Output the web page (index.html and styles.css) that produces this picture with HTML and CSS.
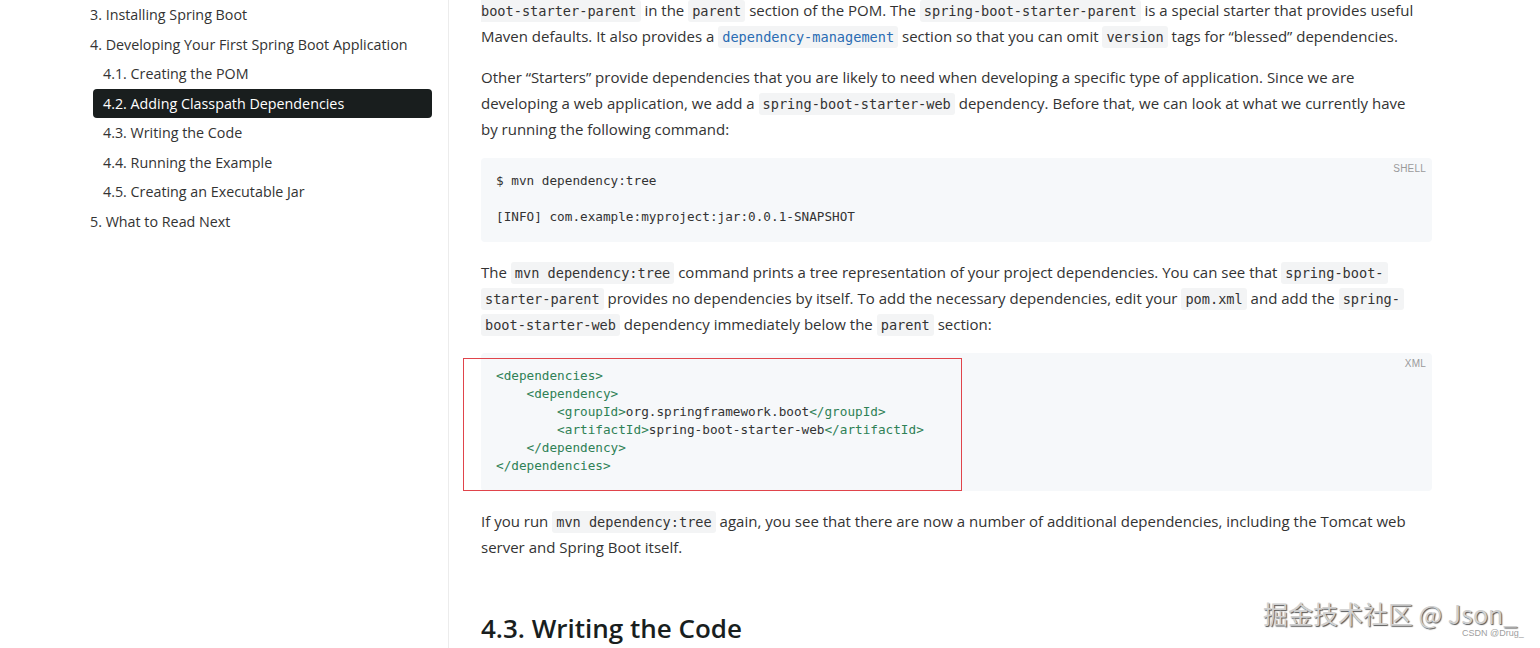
FILE: index.html
```html
<!DOCTYPE html>
<html lang="en">
<head>
<meta charset="utf-8">
<title>Spring Boot – Developing Your First Spring Boot Application</title>
<link rel="stylesheet" href="styles.css">
</head>
<body>
<div class="page">
  <aside class="toc">
    <ul class="toc-list">
      <li><a class="toc-link">3. Installing Spring Boot</a></li>
      <li>
        <a class="toc-link">4. Developing Your First Spring Boot Application</a>
        <ul class="toc-sub">
          <li><a class="toc-link">4.1. Creating the POM</a></li>
          <li><a class="toc-link is-active">4.2. Adding Classpath Dependencies</a></li>
          <li><a class="toc-link">4.3. Writing the Code</a></li>
          <li><a class="toc-link">4.4. Running the Example</a></li>
          <li><a class="toc-link">4.5. Creating an Executable Jar</a></li>
        </ul>
      </li>
      <li><a class="toc-link">5. What to Read Next</a></li>
    </ul>
  </aside>

  <main class="doc">
    <p class="para para-first"><code class="ic ic-cont">boot-starter-parent</code> in the <code class="ic">parent</code> section of the POM. The <code class="ic">spring-boot-starter-parent</code> is a special starter that provides useful<br>Maven defaults. It also provides a <code class="ic ic-link">dependency-management</code> section so that you can omit <code class="ic">version</code> tags for “blessed” dependencies.</p>

    <p class="para">Other “Starters” provide dependencies that you are likely to need when developing a specific type of application. Since we are<br>developing a web application, we add a <code class="ic">spring-boot-starter-web</code> dependency. Before that, we can look at what we currently have<br>by running the following command:</p>

    <div class="code">
      <span class="code-lang">SHELL</span>
<pre class="code-body">$ mvn dependency:tree

[INFO] com.example:myproject:jar:0.0.1-SNAPSHOT</pre>
    </div>

    <p class="para">The <code class="ic">mvn dependency:tree</code> command prints a tree representation of your project dependencies. You can see that <code class="ic">spring-boot-<br>starter-parent</code> provides no dependencies by itself. To add the necessary dependencies, edit your <code class="ic">pom.xml</code> and add the <code class="ic">spring-<br>boot-starter-web</code> dependency immediately below the <code class="ic">parent</code> section:</p>

    <div class="code">
      <span class="code-lang">XML</span>
<pre class="code-body"><span class="tag">&lt;dependencies&gt;</span>
    <span class="tag">&lt;dependency&gt;</span>
        <span class="tag">&lt;groupId&gt;</span>org.springframework.boot<span class="tag">&lt;/groupId&gt;</span>
        <span class="tag">&lt;artifactId&gt;</span>spring-boot-starter-web<span class="tag">&lt;/artifactId&gt;</span>
    <span class="tag">&lt;/dependency&gt;</span>
<span class="tag">&lt;/dependencies&gt;</span></pre>
      <span class="highlight-box"></span>
    </div>

    <p class="para">If you run <code class="ic">mvn dependency:tree</code> again, you see that there are now a number of additional dependencies, including the Tomcat web<br>server and Spring Boot itself.</p>

    <h2 class="section-title">4.3. Writing the Code</h2>
  </main>
</div>

<div class="watermark">掘金技术社区 @ Json_</div>
<div class="csdn-mark">CSDN @Drug_</div>
</body>
</html>
```

FILE: styles.css
```css
* { box-sizing: border-box; }

html, body {
  margin: 0;
  padding: 0;
  background: #ffffff;
  overflow: hidden;
}

body {
  font-family: "Open Sans", "Noto Sans", "Liberation Sans", sans-serif;
  color: #333333;
  width: 1540px;
  height: 648px;
  position: relative;
}

.page {
  display: flex;
  align-items: stretch;
  height: 648px;
}

/* ---------- sidebar ---------- */
.toc {
  width: 449px;
  flex: 0 0 449px;
  border-right: 1px solid #ececec;
  padding: 0 16px 0 80px;
}

.toc-list,
.toc-sub {
  list-style: none;
  margin: 0;
  padding: 0;
}

.toc-sub {
  margin-left: 13px;
}

.toc-link {
  display: block;
  padding: 4px 10px;
  font-size: 14.3px;
  line-height: 21.5px;
  color: #333333;
  border-radius: 4px;
  white-space: nowrap;
}

.toc-link.is-active {
  background: #191e1e;
  color: #ffffff;
}

/* ---------- main ---------- */
.doc {
  flex: 0 0 auto;
  width: 983px;
  padding-left: 32px;
}

.para {
  margin: 0 0 16px;
  font-size: 15px;
  line-height: 26px;
  color: #333333;
}

.para-first {
  margin-top: -3px;
  margin-bottom: 15px;
}

.ic {
  font-family: "DejaVu Sans Mono", "Liberation Mono", monospace;
  font-size: 13.6px;
  line-height: 1;
  color: #333333;
  background: #f3f4f5;
  padding: 3px 4px;
  border-radius: 3px;
  -webkit-box-decoration-break: clone;
  box-decoration-break: clone;
}

.ic-cont {
  padding-left: 0;
  border-radius: 0 3px 3px 0;
}

.ic-link {
  color: #2a6cb3;
}

.code {
  position: relative;
  margin: 0 0 17px;
  background: #f6f8fa;
  border-radius: 4px;
  padding: 14px 15px 16px;
}

.code-lang {
  position: absolute;
  top: 5px;
  right: 6px;
  font-family: "Liberation Sans", "DejaVu Sans", sans-serif;
  font-size: 10px;
  line-height: 12px;
  color: #9a9a9a;
  letter-spacing: 0.2px;
}

.code-body {
  margin: 0;
  font-family: "DejaVu Sans Mono", "Liberation Mono", monospace;
  font-size: 12.7px;
  line-height: 18px;
  color: #333333;
  white-space: pre;
}

.tag {
  color: #2f8156;
}

.highlight-box {
  position: absolute;
  left: -18px;
  top: 5px;
  width: 499px;
  height: 133px;
  border: 1px solid #e0444b;
  pointer-events: none;
}

.section-title {
  margin: 52px 0 0;
  font-size: 26px;
  line-height: 32px;
  font-weight: 600;
  color: #191e1e;
}

/* ---------- watermarks ---------- */
.watermark {
  position: absolute;
  left: 1263px;
  top: 596px;
  font-family: "Noto Sans CJK SC", "Noto Sans", sans-serif;
  font-size: 25px;
  line-height: 34px;
  color: #d0d0d0;
  text-shadow: 1px 1px 1px #555555, -1px -1px 0 #ffffff;
  white-space: nowrap;
}

.csdn-mark {
  position: absolute;
  left: 1462px;
  top: 627px;
  font-family: "Liberation Sans", sans-serif;
  font-size: 9px;
  line-height: 12px;
  color: #a0a0a0;
  white-space: nowrap;
}
```
